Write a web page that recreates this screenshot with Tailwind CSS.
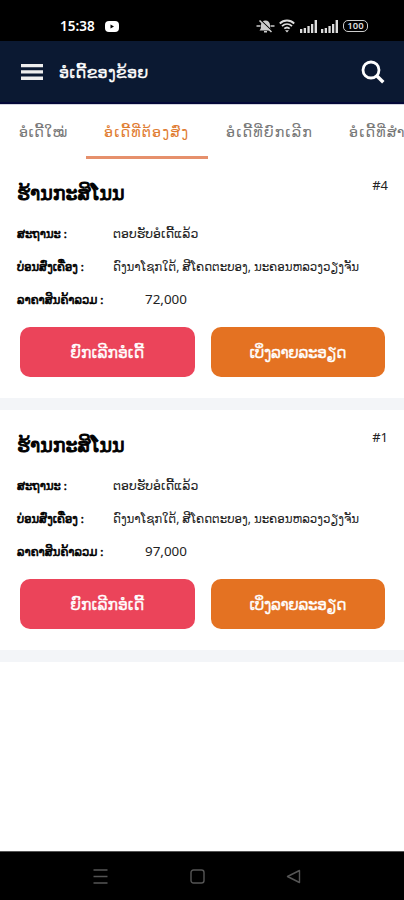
<!DOCTYPE html>
<html lang="lo">
<head>
    <meta charset="UTF-8">
    <meta name="viewport" content="width=device-width, initial-scale=1.0">
    <title>ອໍເດີ້ຂອງຂ້ອຍ</title>
    <script src="https://cdn.jsdelivr.net/npm/@tailwindcss/browser@4"></script>
</head>
<body class="bg-white font-['Noto_Sans','DejaVu_Sans',sans-serif] text-[#222] whitespace-nowrap">
    <div class="w-[404px] h-[900px] flex flex-col overflow-hidden">

        <!-- Status bar -->
        <div class="h-[41px] shrink-0 bg-black text-white flex items-start pt-[17px] pl-[60px] pr-[36px]">
            <span class="w-[35px] text-[13.5px] leading-[18px] font-semibold">15:38</span>
            <svg class="ml-[10px] mt-[4px] w-[14px] h-[11px]" viewBox="0 0 14 11">
                <rect width="14" height="11" rx="4" fill="#fff"/>
                <path d="M5.500 3.500v4L9 5.500z" fill="#000"/>
            </svg>
            <div class="ml-auto flex items-center h-[18px]">
                <svg class="w-[19px] h-[14px]" viewBox="0 0 19 14">
                    <path d="M3.500 11.500c1.500-1.500 1.500-3 1.500-5.500C5 3.500 7 1.500 9.500 1.500s4.500 2 4.500 4.500c0 2.500 0 4 1.500 5.500zM8 12h3v1.500H8z" fill="#ccc"/>
                    <path d="M5.500 2l11 10.500" stroke="#000" stroke-width="1.200"/>
                    <path d="M3.500 1.500L15.500 13M.5 7h4M14.500 7h4" stroke="#ccc" stroke-width="1.600"/>
                </svg>
                <svg class="ml-[4px] w-[16px] h-[14px]" viewBox="0 0 16 14" fill="none" stroke="#ddd" stroke-width="1.800">
                    <path d="M.8 4.500c4-4 10.400-4 14.400 0M3 7.200c3-2.800 7-2.800 10 0M5.300 9.700c1.600-1.500 3.800-1.500 5.400 0"/>
                    <path d="M6 11.200h4L8 13.600z" fill="#ddd" stroke="none"/>
                </svg>
                <svg class="ml-[5px] w-[17px] h-[13px]" viewBox="0 0 17 13" fill="#ddd">
                    <path d="M0 9h2.300v4H0zM3.700 8H6v5H3.700zM7.400 6h2.300v7H7.400zM11 4h2.300v9H11zM14.600 0H17v13h-2.400z"/>
                </svg>
                <svg class="ml-[4px] w-[17px] h-[13px]" viewBox="0 0 17 13" fill="#ddd">
                    <path d="M0 9h2.300v4H0zM3.700 8H6v5H3.700zM7.400 6h2.300v7H7.400zM11 4h2.300v9H11zM14.600 0H17v13h-2.400z"/>
                </svg>
                <div class="ml-[5px] w-[25px] h-[12px] rounded-[5px] border border-[#ccc] text-[#ddd] text-[9.5px] leading-[10px] font-semibold text-center">100</div>
            </div>
        </div>

        <!-- App bar -->
        <header class="h-[63px] shrink-0 bg-[#0b1932] border-b-2 border-[#040838] flex items-center pl-[21px] pr-[19px] text-white">
            <svg class="w-[22px] h-[16px]" viewBox="0 0 22 16" fill="#eee">
                <path d="M0 0h22v3.300H0zM0 6.300h22v3.300H0zM0 12.600h22v3.300H0z"/>
            </svg>
            <h1 class="ml-[16px] text-[16px] leading-[24px] tracking-[0.2px] [-webkit-text-stroke:0.3px]">ອໍເດີ້ຂອງຂ້ອຍ</h1>
            <svg class="ml-auto w-[24px] h-[24px]" viewBox="0 0 24 24" fill="none" stroke="#fff" stroke-width="2.800">
                <circle cx="10" cy="10" r="8"/>
                <path d="M15.700 15.700l6.600 6.600" stroke-width="3.400"/>
            </svg>
        </header>

        <!-- Tabs -->
        <nav class="h-[55px] shrink-0 flex text-[14.3px] leading-[53px] tracking-[1.1px] text-[#777] border-t border-[#d4d5df]">
            <div class="w-[86px] shrink-0 pl-[19px] tracking-[0.4px]">ອໍເດີ້ໃໝ່</div>
            <div class="w-[122px] shrink-0 pl-[18px] text-[#df7b30] border-b-[3px] border-[#e6906c]">ອໍເດີ້ທີ່ຕ້ອງສົ່ງ</div>
            <div class="w-[123px] shrink-0 pl-[18px]">ອໍເດີ້ທີ່ຍົກເລີກ</div>
            <div class="w-[140px] shrink-0 pl-[18px]">ອໍເດີ້ທີ່ສຳເລັດ</div>
        </nav>

        <!-- Orders -->
        <main class="flex-1 bg-white">
            <section class="h-[251px] border-b-[12px] border-[#f3f5f8] pt-[18px]">
                <div class="flex justify-between pl-[17px] pr-[16px] h-[40px]">
                    <h2 class="text-[19px] leading-[32px] text-black [-webkit-text-stroke:0.9px]">ຮ້ານກະສິໂນນ</h2>
                    <span class="text-[13px] leading-[16px]">#4</span>
                </div>
                <dl class="pl-[17px] leading-[33px]">
                    <div class="flex h-[33px]"><dt class="w-[96px] text-[11.5px] text-black [-webkit-text-stroke:0.6px]">ສະຖານະ :</dt><dd class="text-[12.5px]">ຕອບຮັບອໍເດີ້ແລ້ວ</dd></div>
                    <div class="flex h-[33px]"><dt class="w-[96px] text-[11.5px] text-black [-webkit-text-stroke:0.6px]">ບ່ອນສົ່ງເຄື່ອງ :</dt><dd class="text-[11.8px]">ດົງນາໂຊກໃຕ້, ສີໂຄດຕະບອງ, ນະຄອນຫລວງວຽງຈັນ</dd></div>
                    <div class="flex h-[33px]"><dt class="w-[128px] text-[11.5px] text-black [-webkit-text-stroke:0.6px]">ລາຄາສິນຄ້າລວມ :</dt><dd class="text-[13.4px]">72,000</dd></div>
                </dl>
                <div class="mt-[11px] pl-[20px] pr-[19px] grid grid-cols-2 gap-[16px] leading-[49px] text-white text-center [-webkit-text-stroke:0.3px]">
                    <button class="h-[50px] rounded-[10px] bg-[#eb445a] text-[15.6px]">ຍົກເລີກອໍເດີ້</button>
                    <button class="h-[50px] rounded-[10px] bg-[#e47222] text-[15.3px] tracking-[-0.4px]">ເບິ່ງລາຍລະອຽດ</button>
                </div>
            </section>

            <section class="h-[252px] border-b-[12px] border-[#f3f5f8] pt-[19px]">
                <div class="flex justify-between pl-[17px] pr-[16px] h-[40px]">
                    <h2 class="text-[19px] leading-[32px] text-black [-webkit-text-stroke:0.9px]">ຮ້ານກະສິໂນນ</h2>
                    <span class="text-[13px] leading-[16px]">#1</span>
                </div>
                <dl class="pl-[17px] leading-[33px]">
                    <div class="flex h-[33px]"><dt class="w-[96px] text-[11.5px] text-black [-webkit-text-stroke:0.6px]">ສະຖານະ :</dt><dd class="text-[12.5px]">ຕອບຮັບອໍເດີ້ແລ້ວ</dd></div>
                    <div class="flex h-[33px]"><dt class="w-[96px] text-[11.5px] text-black [-webkit-text-stroke:0.6px]">ບ່ອນສົ່ງເຄື່ອງ :</dt><dd class="text-[11.8px]">ດົງນາໂຊກໃຕ້, ສີໂຄດຕະບອງ, ນະຄອນຫລວງວຽງຈັນ</dd></div>
                    <div class="flex h-[33px]"><dt class="w-[128px] text-[11.5px] text-black [-webkit-text-stroke:0.6px]">ລາຄາສິນຄ້າລວມ :</dt><dd class="text-[13.4px]">97,000</dd></div>
                </dl>
                <div class="mt-[11px] pl-[20px] pr-[19px] grid grid-cols-2 gap-[16px] leading-[49px] text-white text-center [-webkit-text-stroke:0.3px]">
                    <button class="h-[50px] rounded-[10px] bg-[#eb445a] text-[15.6px]">ຍົກເລີກອໍເດີ້</button>
                    <button class="h-[50px] rounded-[10px] bg-[#e47222] text-[15.3px] tracking-[-0.4px]">ເບິ່ງລາຍລະອຽດ</button>
                </div>
            </section>
        </main>

        <!-- Android navigation bar -->
        <footer class="h-[49px] shrink-0 bg-black border-t border-[#555] flex items-center justify-between pl-[93px] pr-[103px]">
            <svg class="w-[15px] h-[15px]" viewBox="0 0 15 15" stroke="#555" stroke-width="1.400"><path d="M.5 1h14M.5 7.500h14M.5 14h14"/></svg>
            <svg class="w-[15px] h-[15px]" viewBox="0 0 15 15" fill="none" stroke="#555" stroke-width="1.400"><rect x="1" y="1" width="13" height="13" rx="2.500"/></svg>
            <svg class="w-[15px] h-[15px]" viewBox="0 0 15 15" fill="none" stroke="#555" stroke-width="1.400" stroke-linejoin="round"><path d="M13.500 1.500v12L1.500 7.500z"/></svg>
        </footer>
    </div>
</body>
</html>
